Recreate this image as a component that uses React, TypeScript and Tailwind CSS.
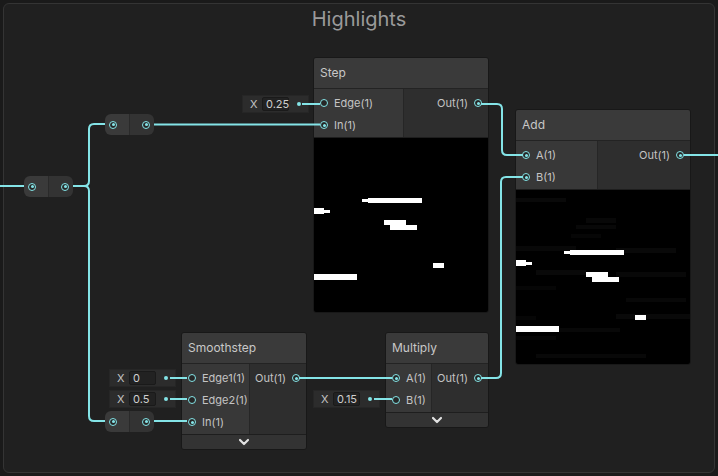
import type { ReactNode } from 'react';

type PortDef = { label: string; linked?: boolean };

const font = { fontFamily: 'Inter, "Noto Sans", sans-serif' };

function PortDot({ linked = true }: { linked?: boolean }) {
  return (
    <span className="flex h-[8px] w-[8px] shrink-0 items-center justify-center rounded-full border-[1.5px] border-[#84e4e7] bg-[#262626]">
      {linked && <span className="h-[3px] w-[3px] rounded-full bg-[#84e4e7]" />}
    </span>
  );
}

function Chevron() {
  return (
    <svg width="12" height="8" viewBox="0 0 12 8">
      <polyline points="2,2 6,6 10,2" fill="none" stroke="#e2e2e2" strokeWidth="2.2" strokeLinecap="round" strokeLinejoin="round" />
    </svg>
  );
}

function GraphNode({
  title,
  className,
  inputsClass,
  inputs,
  outputs,
  children,
  collapse,
}: {
  title: string;
  className: string;
  inputsClass: string;
  inputs: PortDef[];
  outputs: PortDef[];
  children?: ReactNode;
  collapse?: boolean;
}) {
  return (
    <div className={`absolute overflow-hidden rounded-[3px] border border-[#181818] ${className}`}>
      {/* Title bar */}
      <div className="flex h-[31px] items-center border-b border-[#232323] bg-[#3a3a3a] pl-[6px] text-[12px] text-[#c8c8c8]">
        {title}
      </div>

      {/* Ports */}
      <div className="flex border-b border-[#1e1e1e]">
        <div className={`border-r border-[#262626] bg-[#383838] pt-[3px] pb-[1px] ${inputsClass}`}>
          {inputs.map((p) => (
            <div key={p.label} className="flex h-[22px] items-center gap-[6px] pl-[6px] text-[11px] text-[#c4c4c4]">
              <PortDot linked={p.linked} />
              <span>{p.label}</span>
            </div>
          ))}
        </div>
        <div className="flex-1 bg-[#2e2e2e] pt-[3px] pb-[1px]">
          {outputs.map((p) => (
            <div key={p.label} className="flex h-[22px] items-center justify-end gap-[6px] pr-[6px] text-[11px] text-[#c4c4c4]">
              <span>{p.label}</span>
              <PortDot />
            </div>
          ))}
        </div>
      </div>

      {children}

      {collapse && (
        <div className="flex h-[14px] items-center justify-center bg-[#333333]">
          <Chevron />
        </div>
      )}
    </div>
  );
}

function InlineValue({ value, className }: { value: string; className: string }) {
  return (
    <div className={`absolute flex h-[18px] w-[67px] items-center border border-[#262626] bg-[#2c2c2c] text-[11px] ${className}`}>
      <span className="w-[19px] pl-[7px] text-[#c4c4c4]">X</span>
      <span className="flex h-[14px] w-[27px] items-center rounded-[2px] border border-[#1a1a1a] bg-[#222222] pl-[3px] text-[#cfcfcf]">
        {value}
      </span>
      <span className="ml-auto mr-[7px] h-[4px] w-[4px] rounded-full bg-[#84e4e7]" />
    </div>
  );
}

function Reroute({ className }: { className: string }) {
  return (
    <div className={`absolute flex h-[21px] w-[49px] overflow-hidden rounded-[6px] ${className}`}>
      <div className="flex flex-1 items-center justify-start border-r border-[#2a2a2a] bg-[#3a3a3a] pl-[4px]">
        <PortDot />
      </div>
      <div className="flex flex-1 items-center justify-end bg-[#333333] pr-[4px]">
        <PortDot />
      </div>
    </div>
  );
}

const blocks = [
  [54, 60, 54, 5],
  [48, 61, 6, 3],
  [0, 70, 10, 6],
  [10, 72, 6, 3],
  [70, 82, 22, 5],
  [76, 87, 27, 5],
  [119, 125, 11, 5],
  [0, 136, 43, 6],
];

const haze = [
  [0, 8, 50, 4, 0.035],
  [70, 28, 30, 5, 0.03],
  [60, 35, 40, 4, 0.03],
  [55, 44, 30, 4, 0.025],
  [0, 56, 60, 5, 0.03],
  [100, 58, 60, 5, 0.035],
  [20, 80, 50, 5, 0.035],
  [100, 82, 70, 5, 0.03],
  [0, 96, 40, 4, 0.025],
  [110, 108, 60, 4, 0.03],
  [100, 124, 74, 5, 0.035],
  [0, 126, 20, 4, 0.025],
  [44, 138, 60, 4, 0.03],
  [0, 146, 40, 4, 0.025],
  [20, 164, 110, 4, 0.03],
];

function Preview({ noisy }: { noisy?: boolean }) {
  return (
    <svg width="174" height="174" viewBox="0 0 174 174" className="block bg-black">
      {noisy &&
        haze.map(([x, y, w, h, o], i) => <rect key={`h${i}`} x={x} y={y} width={w} height={h} fill="#ffffff" opacity={o} />)}
      {blocks.map(([x, y, w, h], i) => (
        <rect key={i} x={x} y={y} width={w} height={h} fill="#ffffff" />
      ))}
    </svg>
  );
}

export default function App() {
  return (
    <div className="relative h-[476px] w-[718px] overflow-hidden bg-[#1a1a1a] p-[3px]" style={font}>
      {/* Group */}
      <div className="h-full rounded-[6px] border border-[#343434] bg-[#202020]">
        <div className="pt-[3px] text-center text-[20px] leading-[24px] text-[#9a9a9a]">Highlights</div>
      </div>

      <Reroute className="left-[24px] top-[176px]" />
      <Reroute className="left-[105px] top-[114px]" />
      <Reroute className="left-[105px] top-[411px]" />

      <InlineValue value="0.25" className="left-[242px] top-[95px]" />
      <InlineValue value="0" className="left-[109px] top-[369px]" />
      <InlineValue value="0.5" className="left-[109px] top-[390px]" />
      <InlineValue value="0.15" className="left-[313px] top-[390px]" />

      <GraphNode
        title="Step"
        className="left-[313px] top-[57px] w-[176px]"
        inputsClass="w-[90px]"
        inputs={[{ label: 'Edge(1)', linked: false }, { label: 'In(1)' }]}
        outputs={[{ label: 'Out(1)' }]}
      >
        <Preview />
      </GraphNode>

      <GraphNode
        title="Add"
        className="left-[515px] top-[109px] w-[176px]"
        inputsClass="w-[82px]"
        inputs={[{ label: 'A(1)' }, { label: 'B(1)' }]}
        outputs={[{ label: 'Out(1)' }]}
      >
        <Preview noisy />
      </GraphNode>

      <GraphNode
        title="Smoothstep"
        className="left-[181px] top-[332px] w-[126px]"
        inputsClass="w-[68px]"
        inputs={[{ label: 'Edge1(1)', linked: false }, { label: 'Edge2(1)', linked: false }, { label: 'In(1)' }]}
        outputs={[{ label: 'Out(1)' }]}
        collapse
      />

      <GraphNode
        title="Multiply"
        className="left-[385px] top-[332px] w-[104px]"
        inputsClass="w-[46px]"
        inputs={[{ label: 'A(1)' }, { label: 'B(1)', linked: false }]}
        outputs={[{ label: 'Out(1)' }]}
        collapse
      />

      {/* Wires */}
      <svg className="pointer-events-none absolute left-0 top-0" width="718" height="476" viewBox="0 0 718 476">
        <g fill="none" stroke="#84e4e7" strokeWidth="2">
          <path d="M0 186 H24" />
          <path d="M73 186 H84 Q89 186 89 181 V129 Q89 124 94 124 H105" />
          <path d="M84 186 Q89 186 89 191 V416 Q89 421 94 421 H105" />
          <path d="M154 124.5 H320" />
          <path d="M154 421 H187" />
          <path d="M299 378 H392" />
          <path d="M481 104 H497 Q502 104 502 109 V150 Q502 155 507 155 H523" />
          <path d="M481 378 H496 Q501 378 501 373 V182 Q501 177 506 177 H523" />
          <path d="M684 155 H718" />
          <path d="M302 104 H320" />
          <path d="M170 378 H187" />
          <path d="M170 399 H187" />
          <path d="M374 399 H392" />
        </g>
      </svg>
    </div>
  );
}
